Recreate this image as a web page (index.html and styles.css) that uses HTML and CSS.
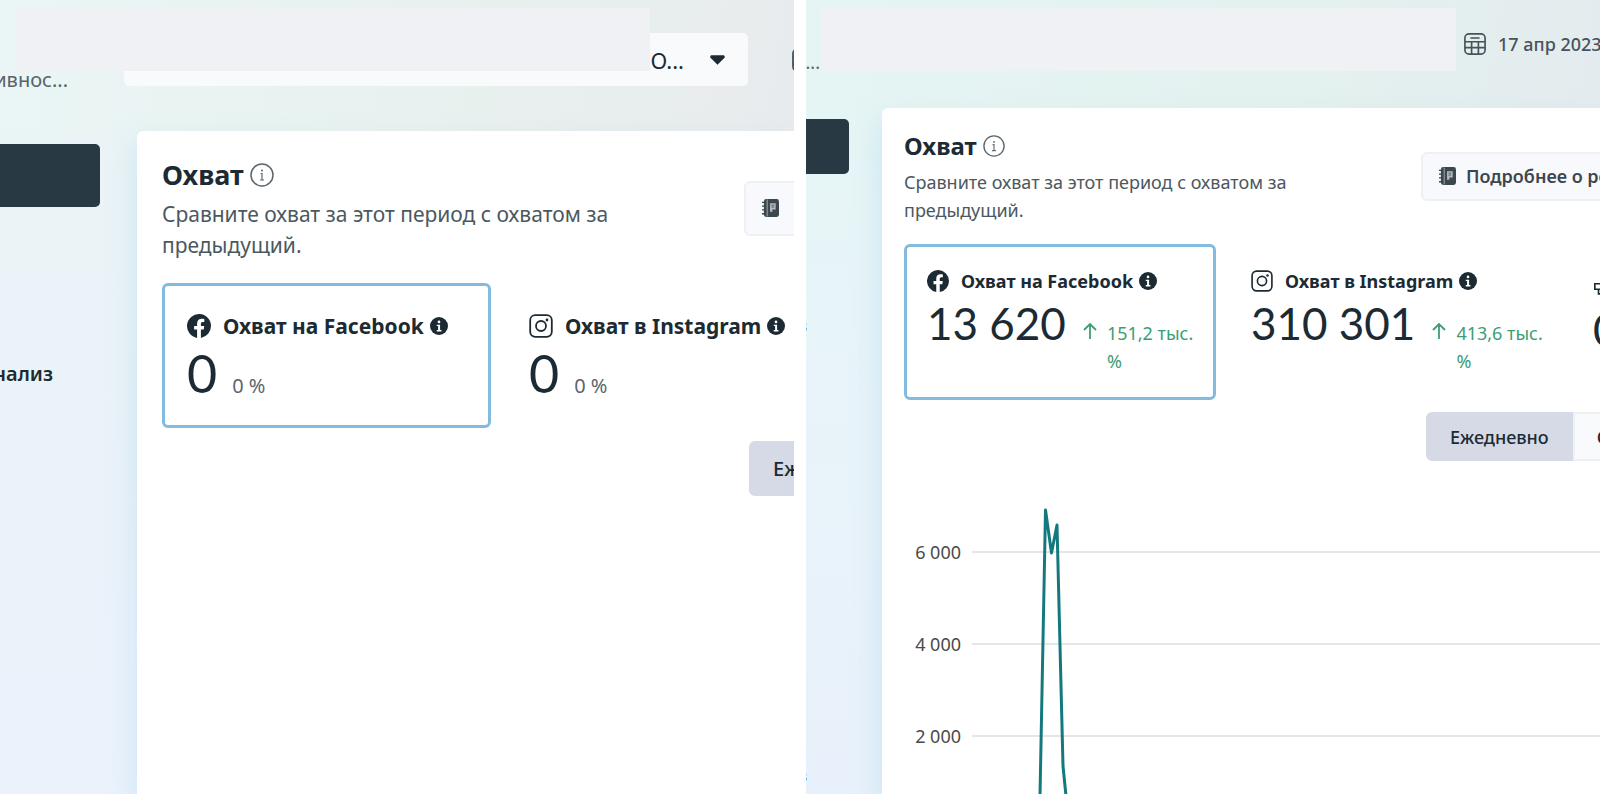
FILE: index.html
```
<!DOCTYPE html>
<html lang="ru">
<head>
  <meta charset="UTF-8">
  <meta name="viewport" content="width=device-width, initial-scale=1.0">
  <title>Охват</title>
  <link rel="stylesheet" href="styles.css">
</head>
<body>
  <!-- shared icons -->
  <svg class="sprite" aria-hidden="true">
    <symbol id="i-info" viewBox="0 0 24 24">
      <circle cx="12" cy="12" r="11" fill="none" stroke="currentColor" stroke-width="1.5"/>
      <circle cx="12" cy="7.5" r="1" fill="currentColor"/>
      <path d="M10.5 10.5h1.5v6.5M10 17h4" fill="none" stroke="currentColor" stroke-width="1.2"/>
    </symbol>
    <symbol id="i-info-solid" viewBox="0 0 20 20">
      <circle cx="10" cy="10" r="10" fill="currentColor"/>
      <circle cx="10" cy="5.5" r="1.5" fill="#fff"/>
      <path d="M7.5 8.5h3.7v6h1.5v1.5H7.5v-1.5H9V10H7.5z" fill="#fff"/>
    </symbol>
    <symbol id="i-facebook" viewBox="0 0 24 24">
      <path d="M24 12a12 12 0 1 0-13.9 11.9v-8.4H7.1V12h3V9.4c0-3 1.8-4.7 4.6-4.7 1.3 0 2.6.2 2.6.2v3h-1.5c-1.5 0-1.9.9-1.9 1.9V12h3.3l-.5 3.5h-2.8v8.4A12 12 0 0 0 24 12z" fill="currentColor"/>
    </symbol>
    <symbol id="i-instagram" viewBox="0 0 24 24">
      <rect x="1.2" y="1.2" width="21.6" height="21.6" rx="5" fill="none" stroke="currentColor" stroke-width="1.8"/>
      <circle cx="12" cy="12" r="5" fill="none" stroke="currentColor" stroke-width="1.8"/>
      <circle cx="18" cy="6" r="1.4" fill="currentColor"/>
    </symbol>
    <symbol id="i-calendar" viewBox="0 0 24 24">
      <rect x="1" y="1" width="22" height="22" rx="4.5" fill="none" stroke="currentColor" stroke-width="1.8"/>
      <path d="M1 9.5h22M1 16h22M8.3 9.5V23M15.7 9.5V23M7 5.4h10" fill="none" stroke="currentColor" stroke-width="1.8"/>
    </symbol>
    <symbol id="i-book" viewBox="0 0 18 20">
      <rect x="2" y="0.5" width="16" height="19" rx="2.5" fill="currentColor"/>
      <path d="M5.5 1v18" stroke="#a5aab0" stroke-width="1"/>
      <path d="M0 4h4M0 8h4M0 12h4M0 16h4" stroke="currentColor" stroke-width="1.5"/>
      <path d="M8.5 5h6v6.5h-3.5V14H8.5z" fill="#b5b9be"/>
      <path d="M10 7h3M10 9h3" stroke="currentColor" stroke-width="0.8"/>
    </symbol>
    <symbol id="i-up" viewBox="0 0 14 18">
      <path d="M7 17V2M1 8l6-6 6 6" fill="none" stroke="currentColor" stroke-width="1.8"/>
    </symbol>
    <symbol id="i-profile" viewBox="0 0 24 24">
      <path d="M2 3h7v6H2zM6 9v5h6" fill="none" stroke="currentColor" stroke-width="1.8"/>
    </symbol>
  </svg>

  <main class="compare">
    <section class="pane pane-before">
      <div class="cover"></div>
      <header class="topbar">
        <span class="crumb"><span>ивнос...</span></span>
        <div class="picker">
          <select aria-label="Аккаунт"><option>О...</option></select>
          <svg class="caret" viewBox="0 0 16 10"><path d="M1 0h14l1 2-8 8-8-8z" fill="currentColor"/></svg>
        </div>
        <button class="date" aria-label="Период"><svg><use href="#i-calendar"/></svg></button>
      </header>
      <div class="body">
        <nav class="sidebar">
          <a class="active" href="#" aria-label="Результаты"></a>
          <a class="link" href="#"><span>анализ</span></a>
        </nav>
        <div class="card">
          <div class="card-head">
            <div class="intro">
              <h2>Охват <svg><use href="#i-info"/></svg></h2>
              <p>Сравните охват за этот период с охватом за предыдущий.</p>
            </div>
            <button class="more" aria-label="Подробнее"><svg><use href="#i-book"/></svg></button>
          </div>
          <div class="metrics">
            <div class="metric selected">
              <h3><svg class="brand"><use href="#i-facebook"/></svg>Охват на Facebook<svg class="tip"><use href="#i-info-solid"/></svg></h3>
              <div class="value"><strong>0</strong><span class="flat">0 %</span></div>
            </div>
            <div class="metric">
              <h3><svg class="brand"><use href="#i-instagram"/></svg>Охват в Instagram<svg class="tip"><use href="#i-info-solid"/></svg></h3>
              <div class="value"><strong>0</strong><span class="flat">0 %</span></div>
            </div>
          </div>
          <div class="toggle">
            <button class="on">Ежедневно</button>
          </div>
        </div>
      </div>
    </section>

    <section class="pane pane-after">
      <div class="cover"></div>
      <header class="topbar">
        <span class="crumb"><span>...</span></span>
        <button class="date"><svg><use href="#i-calendar"/></svg>17 апр 2023</button>
      </header>
      <div class="body">
        <nav class="sidebar">
          <a class="active" href="#" aria-label="Результаты"></a>
          <a class="link" href="#"><span>з</span></a>
          <a class="link last" href="#"><span>з</span></a>
        </nav>
        <div class="card">
          <div class="card-head">
            <div class="intro">
              <h2>Охват <svg><use href="#i-info"/></svg></h2>
              <p>Сравните охват за этот период с охватом за предыдущий.</p>
            </div>
            <button class="more"><svg><use href="#i-book"/></svg>Подробнее о результатах</button>
          </div>
          <div class="metrics">
            <div class="metric selected">
              <h3><svg class="brand"><use href="#i-facebook"/></svg>Охват на Facebook<svg class="tip"><use href="#i-info-solid"/></svg></h3>
              <div class="value">
                <strong>13 620</strong>
                <svg class="up"><use href="#i-up"/></svg>
                <span class="growth">151,2 тыс. %</span>
              </div>
            </div>
            <div class="metric">
              <h3><svg class="brand"><use href="#i-instagram"/></svg>Охват в Instagram<svg class="tip"><use href="#i-info-solid"/></svg></h3>
              <div class="value">
                <strong>310 301</strong>
                <svg class="up"><use href="#i-up"/></svg>
                <span class="growth">413,6 тыс. %</span>
              </div>
            </div>
            <div class="metric third">
              <h3><svg class="brand"><use href="#i-profile"/></svg></h3>
              <div class="value"><strong>0</strong></div>
            </div>
          </div>
          <div class="toggle">
            <button class="on">Ежедневно</button><button>Совокупно</button>
          </div>
          <div class="chart">
            <div class="axis">
              <span>6 000</span>
              <span>4 000</span>
              <span>2 000</span>
            </div>
            <svg class="plot" role="img" aria-label="Охват по дням">
              <g stroke="#e6e6e6" stroke-width="2">
                <line x1="0" y1="57" x2="100%" y2="57"/>
                <line x1="0" y1="149" x2="100%" y2="149"/>
                <line x1="0" y1="241" x2="100%" y2="241"/>
              </g>
              <polyline points="68,301 73.5,15 79.5,58 85,30 91,271 94,301" fill="none" stroke="#14797f" stroke-width="3" stroke-linejoin="round"/>
            </svg>
          </div>
        </div>
      </div>
    </section>
  </main>
</body>
</html>
```
FILE: styles.css
```
* {
  box-sizing: border-box;
}
body {
  margin: 0;
  background: #fff;
  color: #1c2b33;
  font-family: "Noto Sans", "Open Sans", sans-serif;
}
h2, h3, p {
  margin: 0;
}
button, select {
  font: inherit;
  color: inherit;
  white-space: nowrap;
}
a {
  color: inherit;
  text-decoration: none;
}
svg {
  flex: none;
}
.sprite {
  position: absolute;
  width: 0;
  height: 0;
}
.compare {
  display: grid;
  grid-template-columns: 1fr 1fr;
  gap: 12px;
  height: 100vh;
  overflow: hidden;
}

/* both panes share one layout, only the scale differs */
.pane {
  position: relative;
  display: flex;
  flex-direction: column;
  min-width: 0;
  overflow: hidden;
  font-size: var(--text);
}
.pane-before {
  --text: 20px;
  --intro-size: 21px;
  --title: 27px;
  --label: 21px;
  --number: 52px;
  --number-line: 62px;
  --line: 31px;
  --title-line: 40px;
  --pad: 25px;
  --top: 24px;
  --bar: 131px;
  --side: 137px;
  --intro: 582px;
  --intro-text: 460px;
  --metric: 329px;
  --metric-height: 145px;
  --metric-pad: 24px 22px;
  --gap: 13px;
  --button: 55px;
  --icon: 24px;
  --nav: 100px;
  --nav-height: 63px;
  --edge: 53px;
  background: linear-gradient(100deg, #eaf5f5 0%, #e8f1ef 55%, #e8ebed 100%) top / 100% 131px no-repeat,
    linear-gradient(180deg, #eaf4f6 131px, #eaf3f8 50%, #ebf2fc 100%);
}
.pane-after {
  --text: 18px;
  --intro-size: 18px;
  --title: 24px;
  --label: 18px;
  --number: 44px;
  --number-line: 52px;
  --line: 28px;
  --title-line: 36px;
  --pad: 22px;
  --top: 20px;
  --bar: 108px;
  --side: 76px;
  --intro: 517px;
  --intro-text: 410px;
  --metric: 312px;
  --metric-height: 156px;
  --metric-pad: 18px 20px;
  --gap: 12px;
  --button: 49px;
  --icon: 22px;
  --nav: 43px;
  --nav-height: 55px;
  --edge: 1px;
  background: linear-gradient(100deg, #e5f5f4 0%, #e3f2ef 60%, #e4ebee 100%) top / 100% 108px no-repeat,
    linear-gradient(180deg, #e5f5f5 108px, #e8f4f9 45%, #e8f1fb 100%);
}

.cover {
  position: absolute;
  z-index: 1;
  top: 8px;
  left: 15px;
  width: 80%;
  height: 63px;
  background: #f0f1f5;
}
.topbar {
  display: flex;
  align-items: flex-start;
  flex: none;
  height: var(--bar);
}
.crumb {
  display: flex;
  flex: none;
  justify-content: flex-end;
  color: #56636a;
}
.pane-before .crumb {
  width: 68px;
  padding-top: 66px;
}
.pane-after .crumb {
  width: 14px;
  padding-top: 50px;
}
.picker {
  position: relative;
  flex: none;
  width: 624px;
  margin: 33px 44px 0 56px;
}
.picker select {
  display: block;
  width: 100%;
  height: 53px;
  padding: 0 64px 0 20px;
  border: 0;
  border-radius: 5px;
  background: #f9fafc;
  font-size: 22px;
  text-align-last: right;
  appearance: none;
}
.caret {
  position: absolute;
  top: 22px;
  right: 23px;
  width: 15px;
  height: 10px;
}
.date {
  display: flex;
  flex: none;
  align-items: center;
  gap: 12px;
  padding: 0;
  border: 0;
  background: none;
  color: #46535a;
  font-weight: 500;
}
.date svg {
  width: var(--icon);
  height: var(--icon);
}
.pane-before .date {
  margin-top: 48px;
}
.pane-after .date {
  margin: 32px 0 0 644px;
}

.body {
  display: flex;
  flex: 1;
  min-height: 0;
}
.sidebar {
  flex: none;
  width: var(--side);
  padding-top: 13px;
}
.active {
  display: block;
  width: var(--nav);
  height: var(--nav-height);
  border-radius: 0 5px 5px 0;
  background: #283943;
}
.pane-after .sidebar {
  padding-top: 11px;
}
.link {
  display: flex;
  justify-content: flex-end;
  width: var(--edge);
  margin-top: 152px;
  font-weight: 600;
  line-height: 30px;
}
.pane-after .link {
  margin-top: 136px;
}
.pane-after .last {
  margin-top: 420px;
}

.card {
  flex: 1;
  min-width: 0;
  padding: var(--top) 0 0 var(--pad);
  border-radius: 6px 0 0 0;
  background: #fff;
  box-shadow: -4px 12px 26px rgba(160, 210, 235, 0.35);
}
.card-head {
  display: flex;
  align-items: center;
  margin-bottom: 22px;
}
.pane-after .card-head {
  margin-bottom: 20px;
}
.intro {
  flex: none;
  width: var(--intro);
}
.intro h2 {
  display: flex;
  align-items: center;
  gap: 6px;
  margin-bottom: 4px;
  font-size: var(--title);
  line-height: var(--title-line);
}
.intro h2 svg {
  width: var(--icon);
  height: var(--icon);
  color: #5b666d;
}
.intro p {
  max-width: var(--intro-text);
  color: #4b5860;
  font-size: var(--intro-size);
  line-height: var(--line);
}
.more {
  display: flex;
  flex: none;
  align-items: center;
  gap: 10px;
  min-width: 80px;
  height: var(--button);
  padding: 0 16px;
  border: 2px solid #eef0f4;
  border-radius: 6px;
  background: #f8f9fc;
  color: #3c474e;
  font-weight: 600;
}
.more svg {
  width: 17px;
  height: 20px;
}

.metrics {
  display: flex;
  gap: var(--gap);
  margin-bottom: var(--gap);
}
.metric {
  flex: none;
  width: var(--metric);
  height: var(--metric-height);
  padding: var(--metric-pad);
  border: 3px solid transparent;
  border-radius: 6px;
}
.metric.selected {
  border-color: #83bbe0;
}
.metric.third {
  margin-left: 18px;
  padding-top: 34px;
}
.metric h3 {
  display: flex;
  align-items: center;
  font-size: var(--label);
  line-height: 32px;
  white-space: nowrap;
}
.brand {
  width: var(--icon);
  height: var(--icon);
  margin-right: 12px;
}
.tip {
  width: 18px;
  height: 18px;
  margin-left: 6px;
}
.value {
  display: flex;
  align-items: baseline;
}
.value strong {
  font-family: Lato, sans-serif;
  font-size: var(--number);
  font-weight: 400;
  line-height: var(--number-line);
  white-space: nowrap;
}
.flat {
  margin-left: 15px;
  color: #5b666d;
}
.up {
  width: 14px;
  height: 18px;
  margin-left: 17px;
  color: #3a9e74;
}
.growth {
  flex: none;
  width: 96px;
  margin-left: 10px;
  color: #3a9e74;
  line-height: var(--line);
}

.toggle {
  display: flex;
  padding-left: calc(var(--intro) + 5px);
}
.toggle button {
  flex: none;
  height: var(--button);
  padding: 0 22px;
  border: 2px solid #eef0f4;
  border-radius: 0 6px 6px 0;
  background: #f9fafc;
  font-weight: 500;
}
.toggle .on {
  border-color: #d5dae6;
  border-radius: 6px 0 0 6px;
  background: #d5dae6;
}

.chart {
  display: flex;
  gap: 11px;
  margin-top: 34px;
}
.axis {
  width: 57px;
  padding-top: 11px;
  color: #4a4a4a;
  text-align: right;
}
.axis span {
  display: block;
  height: 92px;
  line-height: 92px;
}
.plot {
  flex: 1;
  min-width: 0;
  height: 302px;
}
```
